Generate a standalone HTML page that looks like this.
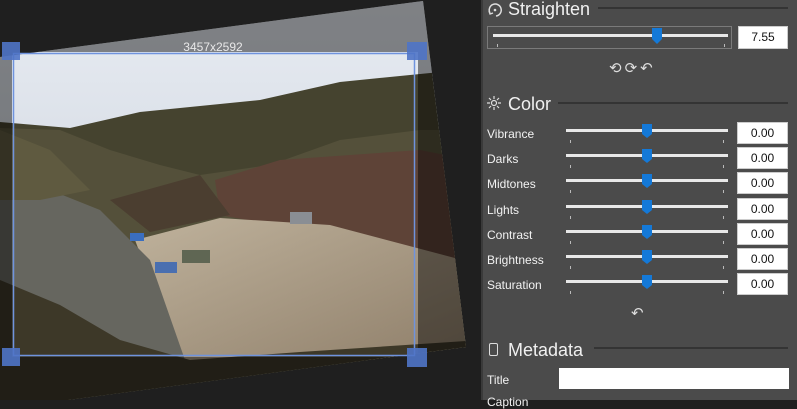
<!DOCTYPE html>
<html><head><meta charset="utf-8"><style>
*{margin:0;padding:0;box-sizing:border-box}
body{width:797px;height:400px;overflow:hidden;background:#1f1f1f;font-family:"Segoe UI","Liberation Sans",sans-serif;position:relative}
#panel{position:absolute;left:481px;top:0;width:316px;height:400px;background:#4b4b4b;border-left:2px solid #3a3a3a}
.a{position:absolute}
.h{color:#f0f0f0;font-size:18px;line-height:20px}
.hl{height:2px;background:#343434}
.lbl{color:#f2f2f2;font-size:12px;line-height:14px}
.vb{background:#fff;border:1px solid #ccc;color:#111;font-size:12px;text-align:center;line-height:20px}
.tr{height:3px;background:#e8e8e8}
.tk{width:1px;height:3px;background:#bbb}
</style></head><body>
<svg class="a" style="left:0;top:0" width="481" height="400" viewBox="0 0 481 400">
<defs>
<clipPath id="ph"><polygon points="0,57 423,1 466,347 0,409"/></clipPath>
<linearGradient id="sky" x1="0" y1="0" x2="0" y2="1"><stop offset="0" stop-color="#e8ecf2"/><stop offset="1" stop-color="#c4ccd8"/></linearGradient>
<linearGradient id="gr" x1="0" y1="0" x2="1" y2="1"><stop offset="0" stop-color="#bfb29c"/><stop offset="1" stop-color="#8f7f6a"/></linearGradient>
</defs>
<g clip-path="url(#ph)">
<rect width="481" height="400" fill="url(#sky)"/>
<polygon points="0,122 70,128 140,112 260,100 340,82 440,72 481,70 481,400 0,400" fill="#45432f"/>
<polygon points="0,128 60,130 110,150 160,165 200,175 270,165 340,140 420,130 481,130 481,400 0,400" fill="#54503a"/>
<polygon points="215,180 280,160 420,150 470,160 470,270 330,235 220,215" fill="#5e4337"/>
<polygon points="110,200 200,175 230,215 150,232" fill="#4b3e30"/>
<polygon points="135,240 220,218 330,225 470,262 470,360 180,360" fill="url(#gr)"/>
<polygon points="0,175 50,190 100,210 150,260 185,360 0,400" fill="#66665f"/>
<polygon points="0,280 60,305 120,340 190,360 300,352 481,340 481,400 0,400" fill="#3d3828"/>
<polygon points="0,130 50,150 90,190 40,200 0,200" fill="#5f5a40"/>
<rect x="290" y="212" width="22" height="12" fill="#8a8e94"/>
<rect x="155" y="262" width="22" height="11" fill="#4a6fb0"/>
<rect x="182" y="250" width="28" height="13" fill="#5f6653"/>
<rect x="130" y="233" width="14" height="8" fill="#3a6ec0"/>
</g>
<path d="M0,0H481V400H0Z M12,52V357H418V52Z" fill="rgba(0,0,0,0.45)" fill-rule="evenodd" clip-path="url(#ph)"/>
<rect x="13.5" y="53.5" width="401" height="302" fill="none" stroke="#6f93de" stroke-width="1.5"/>
<g fill="#4f74c6" fill-opacity="0.9">
<rect x="2" y="42" width="18" height="18"/><rect x="407" y="42" width="20" height="18"/>
<rect x="2" y="348" width="18" height="18"/><rect x="407" y="348" width="20" height="19"/>
</g>
<text x="213" y="51" fill="#e8e8e8" font-size="12" text-anchor="middle" font-family="Liberation Sans,sans-serif">3457x2592</text>
</svg>
<div id="panel"></div>
<svg class="a" style="left:487px;top:2px" width="16" height="16" viewBox="0 0 16 16"><path d="M3,11 A6,6 0 1 1 9,14" fill="none" stroke="#ddd" stroke-width="1.5"/><circle cx="8" cy="8" r="1.3" fill="#ddd"/><path d="M2,9 L3,12 L6,11" fill="none" stroke="#ddd" stroke-width="1.3"/></svg>
<div class="a h" style="left:508px;top:-1px">Straighten</div>
<div class="a hl" style="left:598px;top:7px;width:190px"></div>
<div class="a" style="left:487px;top:26px;width:245px;height:23px;border:1px solid #7a7a7a"></div>
<div class="a tr" style="left:493px;top:34px;width:235px"></div>
<div class="a tk" style="left:497px;top:44px"></div><div class="a tk" style="left:724px;top:44px"></div>
<svg class="a" style="left:652px;top:28px" width="10" height="16"><path d="M0,0H10V11L5,16L0,11Z" fill="#1479d8"/></svg>
<div class="a vb" style="left:738px;top:26px;width:50px;height:23px">7.55</div>
<div class="a" style="left:609px;top:59px;color:#ddd;font-size:15px;letter-spacing:3px">⟲⟳↶</div>
<svg class="a" style="left:487px;top:96px" width="14" height="14" viewBox="0 0 14 14"><circle cx="7" cy="7" r="2.5" fill="none" stroke="#ddd" stroke-width="1.2"/><path d="M7,0V3M7,11V14M0,7H3M11,7H14M2,2L4,4M10,10L12,12M2,12L4,10M10,4L12,2" stroke="#ddd" stroke-width="1.2"/></svg>
<div class="a h" style="left:508px;top:94px">Color</div>
<div class="a hl" style="left:558px;top:102px;width:230px"></div>
<div id="rows"></div>
<div class="a" style="left:631px;top:304px;color:#ddd;font-size:15px">↶</div>
<div class="a" style="left:489px;top:343px;width:9px;height:13px;border:1.5px solid #ddd;border-radius:2px"></div>
<div class="a h" style="left:508px;top:340px">Metadata</div>
<div class="a hl" style="left:594px;top:347px;width:194px"></div>
<div class="a lbl" style="left:487px;top:373px">Title</div>
<div class="a" style="left:559px;top:368px;width:230px;height:21px;background:#fff"></div>
<div class="a lbl" style="left:487px;top:395px">Caption</div>
<script>
var n=["Vibrance","Darks","Midtones","Lights","Contrast","Brightness","Saturation"],h="";
for(var i=0;i<7;i++){var y=Math.round(122+i*25.2);
h+='<div class="a lbl" style="left:487px;top:'+(y+5)+'px">'+n[i]+'</div>'+
'<div class="a tr" style="left:566px;top:'+(y+7)+'px;width:162px"></div>'+
'<div class="a tk" style="left:570px;top:'+(y+18)+'px"></div><div class="a tk" style="left:723px;top:'+(y+18)+'px"></div>'+
'<svg class="a" style="left:642px;top:'+(y+2)+'px" width="10" height="14"><path d="M0,0H10V10L5,14L0,10Z" fill="#1479d8"/></svg>'+
'<div class="a vb" style="left:737px;top:'+y+'px;width:51px;height:22px">0.00</div>';}
document.getElementById("rows").outerHTML=h;
</script>
</body></html>
